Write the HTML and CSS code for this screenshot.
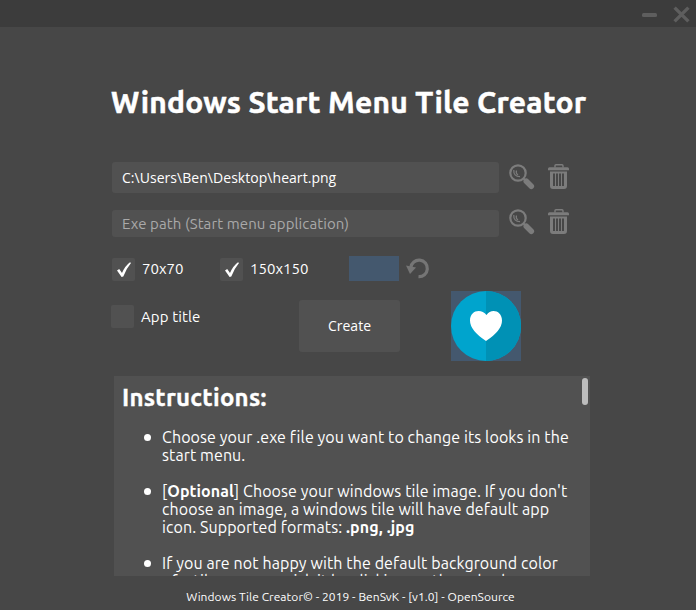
FILE: index.html
```
<!DOCTYPE html>
<html lang="en">
<head>
<meta charset="utf-8">
<title>Windows Start Menu Tile Creator</title>
<link rel="stylesheet" href="styles.css">
</head>
<body>
<svg class="defs" aria-hidden="true">
  <symbol id="search" viewBox="0 0 26 26">
    <circle cx="9" cy="9" r="7.7" fill="none" stroke="currentColor" stroke-width="2.200"/>
    <path d="M4.800 6Q4.300 12.500 11 12.700M7.500 6.500Q6.500 9.500 9 11" fill="none" stroke="currentColor" stroke-width="1.200"/>
    <path d="M17.300 17.300l5 5" stroke="currentColor" stroke-width="5.600" stroke-linecap="round"/>
    <path d="M14 14l3 3" stroke="currentColor" stroke-width="2"/>
  </symbol>
  <symbol id="trash" viewBox="0 0 22 26">
    <path d="M7 3.500V1.800Q7 .8 8 .8h6q1 0 1 1v1.700" fill="none" stroke="currentColor" stroke-width="1.400"/>
    <path d="M1.500 3.200h18q1.500 0 1.500 1.500v1.600H0V4.700q0-1.500 1.500-1.500z" fill="currentColor"/>
    <path fill-rule="evenodd" d="M2 7.500h17v14.500q0 3-3 3H5q-3 0-3-3zM5 9.400V22h2V9.400zM8 9.400V22h2V9.400zM11 9.400V22h2V9.400zM14 9.400V22h2V9.400z" fill="currentColor"/>
  </symbol>
</svg>
<header class="titlebar">
  <svg class="minimize" viewBox="0 0 15 4"><rect width="15" height="4" rx="1.500"/></svg>
  <svg class="close" viewBox="0 0 16 16"><path d="M1.500 1.500l13 13M14.500 1.500l-13 13"/></svg>
</header>
<main>
  <h1><span>Windows Start Menu Tile Creator</span></h1>
  <div class="row first">
    <div class="field"><span class="system path">C:\Users\Ben\Desktop\heart.png</span></div>
    <svg class="search"><use href="#search"/></svg>
    <svg class="trash"><use href="#trash"/></svg>
  </div>
  <div class="row second">
    <div class="field placeholder"><span>Exe path (Start menu application)</span></div>
    <svg class="search"><use href="#search"/></svg>
    <svg class="trash"><use href="#trash"/></svg>
  </div>
  <div class="options">
    <label class="size-small"><i class="box"><svg viewBox="0 0 23 24"><path d="M5 12.500l2.200-1.500 2.800 4Q13 8 18 4.300l1 .7Q14 11 11.300 18.500L9.600 19z"/></svg></i><span>70x70</span></label>
    <label class="size-large"><i class="box"><svg viewBox="0 0 23 24"><path d="M5 12.500l2.200-1.500 2.800 4Q13 8 18 4.300l1 .7Q14 11 11.300 18.500L9.600 19z"/></svg></i><span>150x150</span></label>
    <div class="swatch"></div>
    <svg class="reset" viewBox="0 0 24 22"><path d="M4.800 9.500A8.300 8.300 0 1 1 12.500 18.700" fill="none" stroke="currentColor" stroke-width="3.200"/><path d="M0 7.500L10 9.500 4 16z" fill="currentColor"/></svg>
  </div>
  <div class="actions">
    <label class="title-option"><i class="box"></i><span>App title</span></label>
    <div class="create"><span class="system">Create</span></div>
    <svg class="tile" viewBox="0 0 70 70"><path fill="#44586e" d="M0 0h70v70H0z"/><circle cx="35" cy="35" r="35" fill="#00a4cd"/><path fill="#0091b5" d="M35 0a35 35 0 0 1 0 70z"/><path fill="#fff" d="M35 50Q19 39.500 19 29.500C19 19.500 30 17 35.500 24C40 17 51 19.500 51 29.500Q51 39.500 35 50z"/></svg>
  </div>
  <section class="instructions">
    <h2><span>Instructions:</span></h2>
    <ul>
      <li><span>Choose your .exe file you want to change its looks in the</span><br><span>start menu.</span></li>
      <li><span>[<b>Optional</b>] Choose your windows tile image. If you don't</span><br><span>choose an image, a windows tile will have default app</span><br><span>icon. Supported formats: <b>.png, .jpg</b></span></li>
      <li><span>If you are not happy with the default background color</span><br><span>of a tile, you can pick it by clicking on the color box.</span></li>
    </ul>
    <div class="thumb"></div>
  </section>
</main>
<footer><span>Windows Tile Creator© - 2019 - BenSvK - [v1.0] - OpenSource</span></footer>
</body>
</html>
```
FILE: styles.css
```
* { box-sizing: border-box; }
body {
  margin: 0; width: 696px; height: 610px; overflow: hidden;
  background: #474747; color: #fff;
  font: 15px/18px "Ubuntu", "Noto Sans", sans-serif;
}
span { white-space: nowrap; }
svg { display: block; flex: none; }
.defs { display: none; }
.titlebar {
  height: 27px; background: #3c3c3c; display: flex; justify-content: flex-end;
  align-items: center; gap: 16px; padding: 2px 6px 0 0;
}
.minimize { width: 15px; height: 4px; fill: #5e5e5e; }
.close { width: 17px; height: 17px; stroke: #5e5e5e; stroke-width: 3.2; }
main { padding-left: 112px; }
h1 {
  margin: 55px 0 0 -1px; font-size: 30px; font-weight: 700; line-height: 40px; height: 40px;
  letter-spacing: .22px; -webkit-text-stroke: .5px #fff;
}
.row { display: flex; color: #7c7c7c; }
.first { margin-top: 40px; height: 31px; }
.second { margin-top: 17px; height: 27px; }
.field {
  width: 387px; background: #515151; border-radius: 3px; color: #fff;
  padding-left: 10px; display: flex; align-items: center;
}
.system { font-family: "Open Sans", "Noto Sans", sans-serif; font-size: 14px; }
.path { letter-spacing: .04px; }
.placeholder { color: #a9a9a9; letter-spacing: .1px; }
.search { width: 26px; height: 26px; margin: 2px 0 0 10px; }
.trash { width: 22px; height: 26px; margin: 2px 0 0 13px; }
.second .search, .second .trash { margin-top: -1px; }
.options { display: flex; height: 25px; margin-top: 19px; }
label { display: flex; align-items: center; height: 24px; }
.options label { margin-top: 1px; }
.box { width: 23px; height: 23px; background: #515151; border-radius: 2px; margin-right: 7px; }
.box svg { width: 23px; height: 24px; fill: #fff; }
.size-small { width: 108px; }
.size-large { width: 129px; }
.swatch { width: 50px; height: 25px; background: #44586e; }
.reset { width: 24px; height: 22px; margin: 2px 0 0 7px; color: #757575; }
.actions { display: flex; height: 70px; margin: 10px 0 0 -1px; }
.title-option { width: 188px; margin-top: 13px; letter-spacing: .12px; }
.title-option span { padding-top: 2px; }
.create {
  width: 101px; height: 52px; margin-top: 9px; background: #515151; border-radius: 3px;
  display: flex; align-items: center; justify-content: center;
}
.tile { width: 70px; height: 70px; margin-left: 51px; }
.instructions {
  position: relative; width: 476px; height: 200px; margin: 15px 0 0 2px;
  padding: 7px 8px 0; background: #515151; overflow: hidden;
  font-size: 16px; letter-spacing: .1px;
}
h2 { margin: 0; font-size: 24px; line-height: 30px; letter-spacing: .25px; -webkit-text-stroke: .35px #fff; }
ul { margin: 15px 0 0; padding: 0 0 0 40px; list-style: none; }
li { position: relative; margin-bottom: 18px; }
li::before {
  content: ""; position: absolute; left: -18px; top: 6px; width: 7px; height: 7px;
  border-radius: 50%; background: #fff;
}
.thumb {
  position: absolute; right: 2px; top: 2px; width: 6px; height: 27px;
  background: #bdbdbd; border-radius: 3px;
}
footer { margin-top: 12px; height: 18px; text-align: center; font-size: 12px; padding-left: 5px; letter-spacing: .05px; }
```
